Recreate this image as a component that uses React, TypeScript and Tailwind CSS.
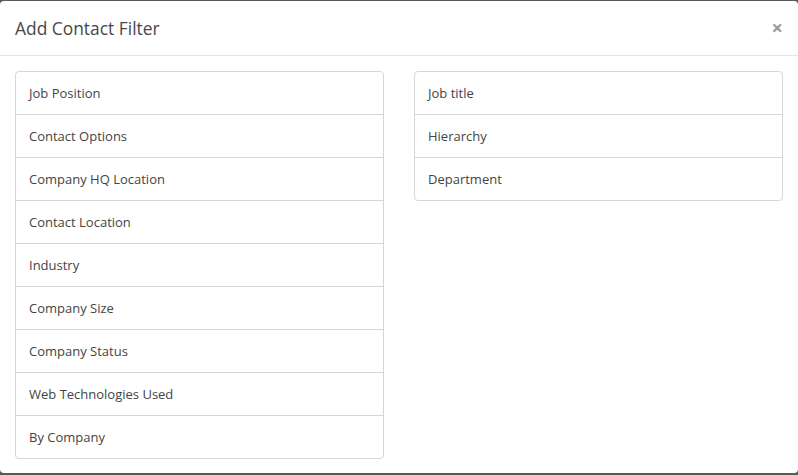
const leftFilters = [
  "Job Position",
  "Contact Options",
  "Company HQ Location",
  "Contact Location",
  "Industry",
  "Company Size",
  "Company Status",
  "Web Technologies Used",
  "By Company",
];

const rightFilters = ["Job title", "Hierarchy", "Department"];

const FilterList = ({ items }: { items: string[] }) => (
  <div className="flex flex-col border border-[#d6d6d6] rounded-[4px] bg-white">
    {items.map((item, i) => (
      <div
        key={item}
        className={`h-[41px] pt-px box-content flex items-center px-[13px] text-[13px] text-[#444444] ${
          i > 0 ? "border-t border-[#d6d6d6]" : ""
        }`}
      >
        {item}
      </div>
    ))}
  </div>
);

const App = () => {
  return (
    <div
      className="w-[798px] h-[475px] bg-[#5a5a5a] pt-px"
      style={{ fontFamily: '"Open Sans", "Liberation Sans", sans-serif' }}
    >
      <div className="h-[472px] bg-white rounded-[4px] flex flex-col">
        <div className="h-[55px] flex items-center justify-between px-[15px] border-b border-[#e5e5e5] shrink-0">
          <h4 className="text-[17.4px] text-[#484848]">Add Contact Filter</h4>
          <button className="text-[#999999] text-[20px] font-bold leading-none">
            ×
          </button>
        </div>
        <div className="grid grid-cols-2 gap-[30px] px-[15px] pt-[15px] items-start">
          <FilterList items={leftFilters} />
          <FilterList items={rightFilters} />
        </div>
      </div>
    </div>
  );
};

export default App;
